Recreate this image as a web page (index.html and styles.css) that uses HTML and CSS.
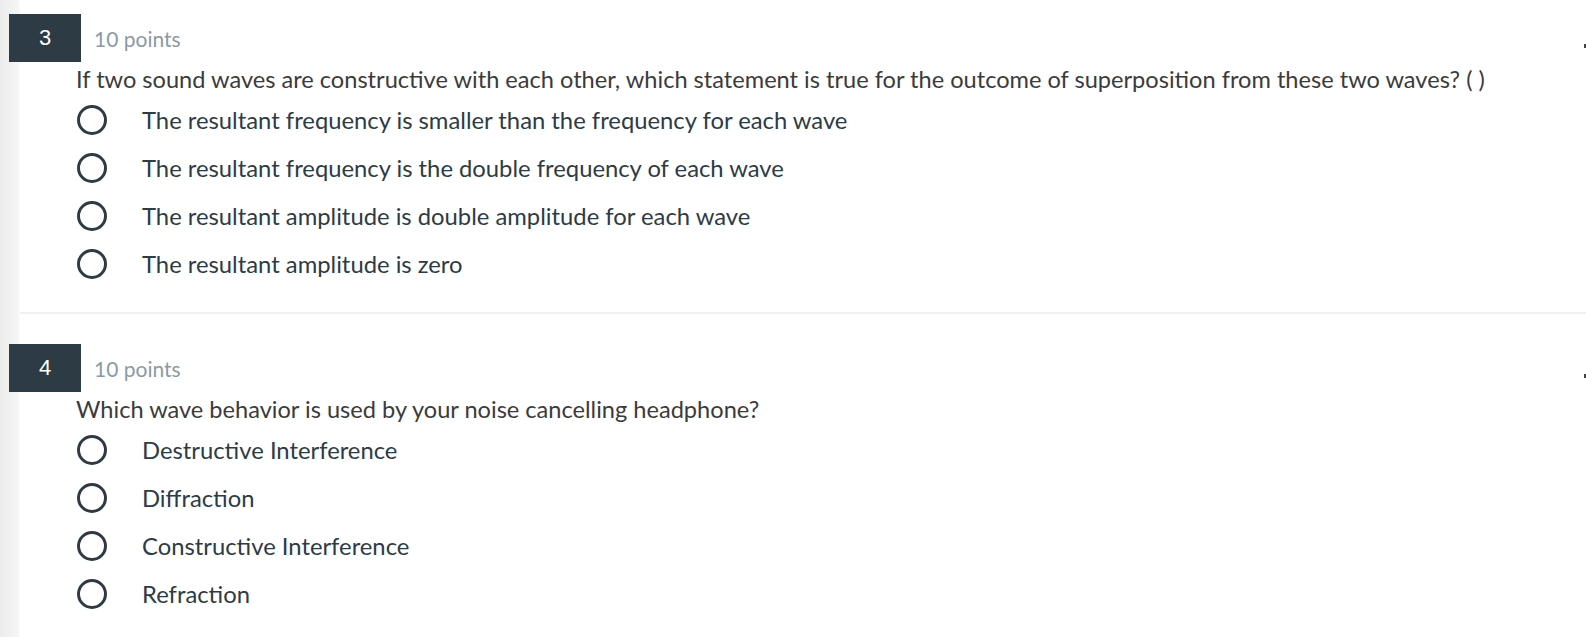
FILE: index.html
```html
<!DOCTYPE html>
<html>
<head>
<meta charset="utf-8">
<link rel="stylesheet" href="styles.css">
</head>
<body>
<div class="page">
  <section class="question">
    <div class="q-header">
      <div class="q-number">3</div>
      <div class="q-points">10 points</div>
      <span class="q-edge"></span>
    </div>
    <div class="q-text">If two sound waves are constructive with each other, which statement is true for the outcome of superposition from these two waves? ( )</div>
    <ul class="options">
      <li class="option"><span class="radio"></span><span class="opt-label">The resultant frequency is smaller than the frequency for each wave</span></li>
      <li class="option"><span class="radio"></span><span class="opt-label">The resultant frequency is the double frequency of each wave</span></li>
      <li class="option"><span class="radio"></span><span class="opt-label">The resultant amplitude is double amplitude for each wave</span></li>
      <li class="option"><span class="radio"></span><span class="opt-label">The resultant amplitude is zero</span></li>
    </ul>
  </section>
  <div class="divider"></div>
  <section class="question">
    <div class="q-header">
      <div class="q-number">4</div>
      <div class="q-points">10 points</div>
      <span class="q-edge"></span>
    </div>
    <div class="q-text">Which wave behavior is used by your noise cancelling headphone?</div>
    <ul class="options">
      <li class="option"><span class="radio"></span><span class="opt-label">Destructive Interference</span></li>
      <li class="option"><span class="radio"></span><span class="opt-label">Diffraction</span></li>
      <li class="option"><span class="radio"></span><span class="opt-label">Constructive Interference</span></li>
      <li class="option"><span class="radio"></span><span class="opt-label">Refraction</span></li>
    </ul>
  </section>
</div>
</body>
</html>
```

FILE: styles.css
```css
html, body {
  margin: 0;
  padding: 0;
}
body {
  width: 1586px;
  height: 637px;
  overflow: hidden;
  background: linear-gradient(to right, #ececec 0px, #f6f6f6 19px, #ffffff 20px);
  font-family: Lato, "Open Sans", sans-serif;
}
.page {
  padding-top: 14px;
}
.question {
  position: relative;
}
.q-header {
  display: flex;
  align-items: center;
  height: 48px;
}
.q-number {
  margin-left: 9px;
  width: 72px;
  height: 48px;
  background: #2d3b45;
  color: #ffffff;
  font-family: "Liberation Sans", Arial, sans-serif;
  font-size: 22px;
  display: flex;
  align-items: center;
  justify-content: center;
}
.q-points {
  margin-left: 13px;
  color: #8b9aa5;
  font-size: 21px;
}
.q-edge {
  position: absolute;
  left: 1584px;
  top: 30px;
  width: 2px;
  height: 4px;
  background: #3a4650;
}
.q-text {
  margin: 5px 0 0 76px;
  font-size: 23.6px;
  line-height: 24px;
  color: #3b3b3b;
}
.options {
  list-style: none;
  margin: 5px 0 0 0;
  padding: 0;
}
.option {
  display: flex;
  align-items: center;
  height: 48px;
  padding-left: 77px;
}
.radio {
  box-sizing: border-box;
  width: 30px;
  height: 30px;
  border: 3px solid #2d3b45;
  border-radius: 50%;
  flex: none;
}
.opt-label {
  margin-left: 35px;
  font-size: 23.8px;
  color: #2d3b45;
}
.divider {
  margin: 24px 0 30px 20px;
  height: 2px;
  background: #f0f0f0;
}
```
